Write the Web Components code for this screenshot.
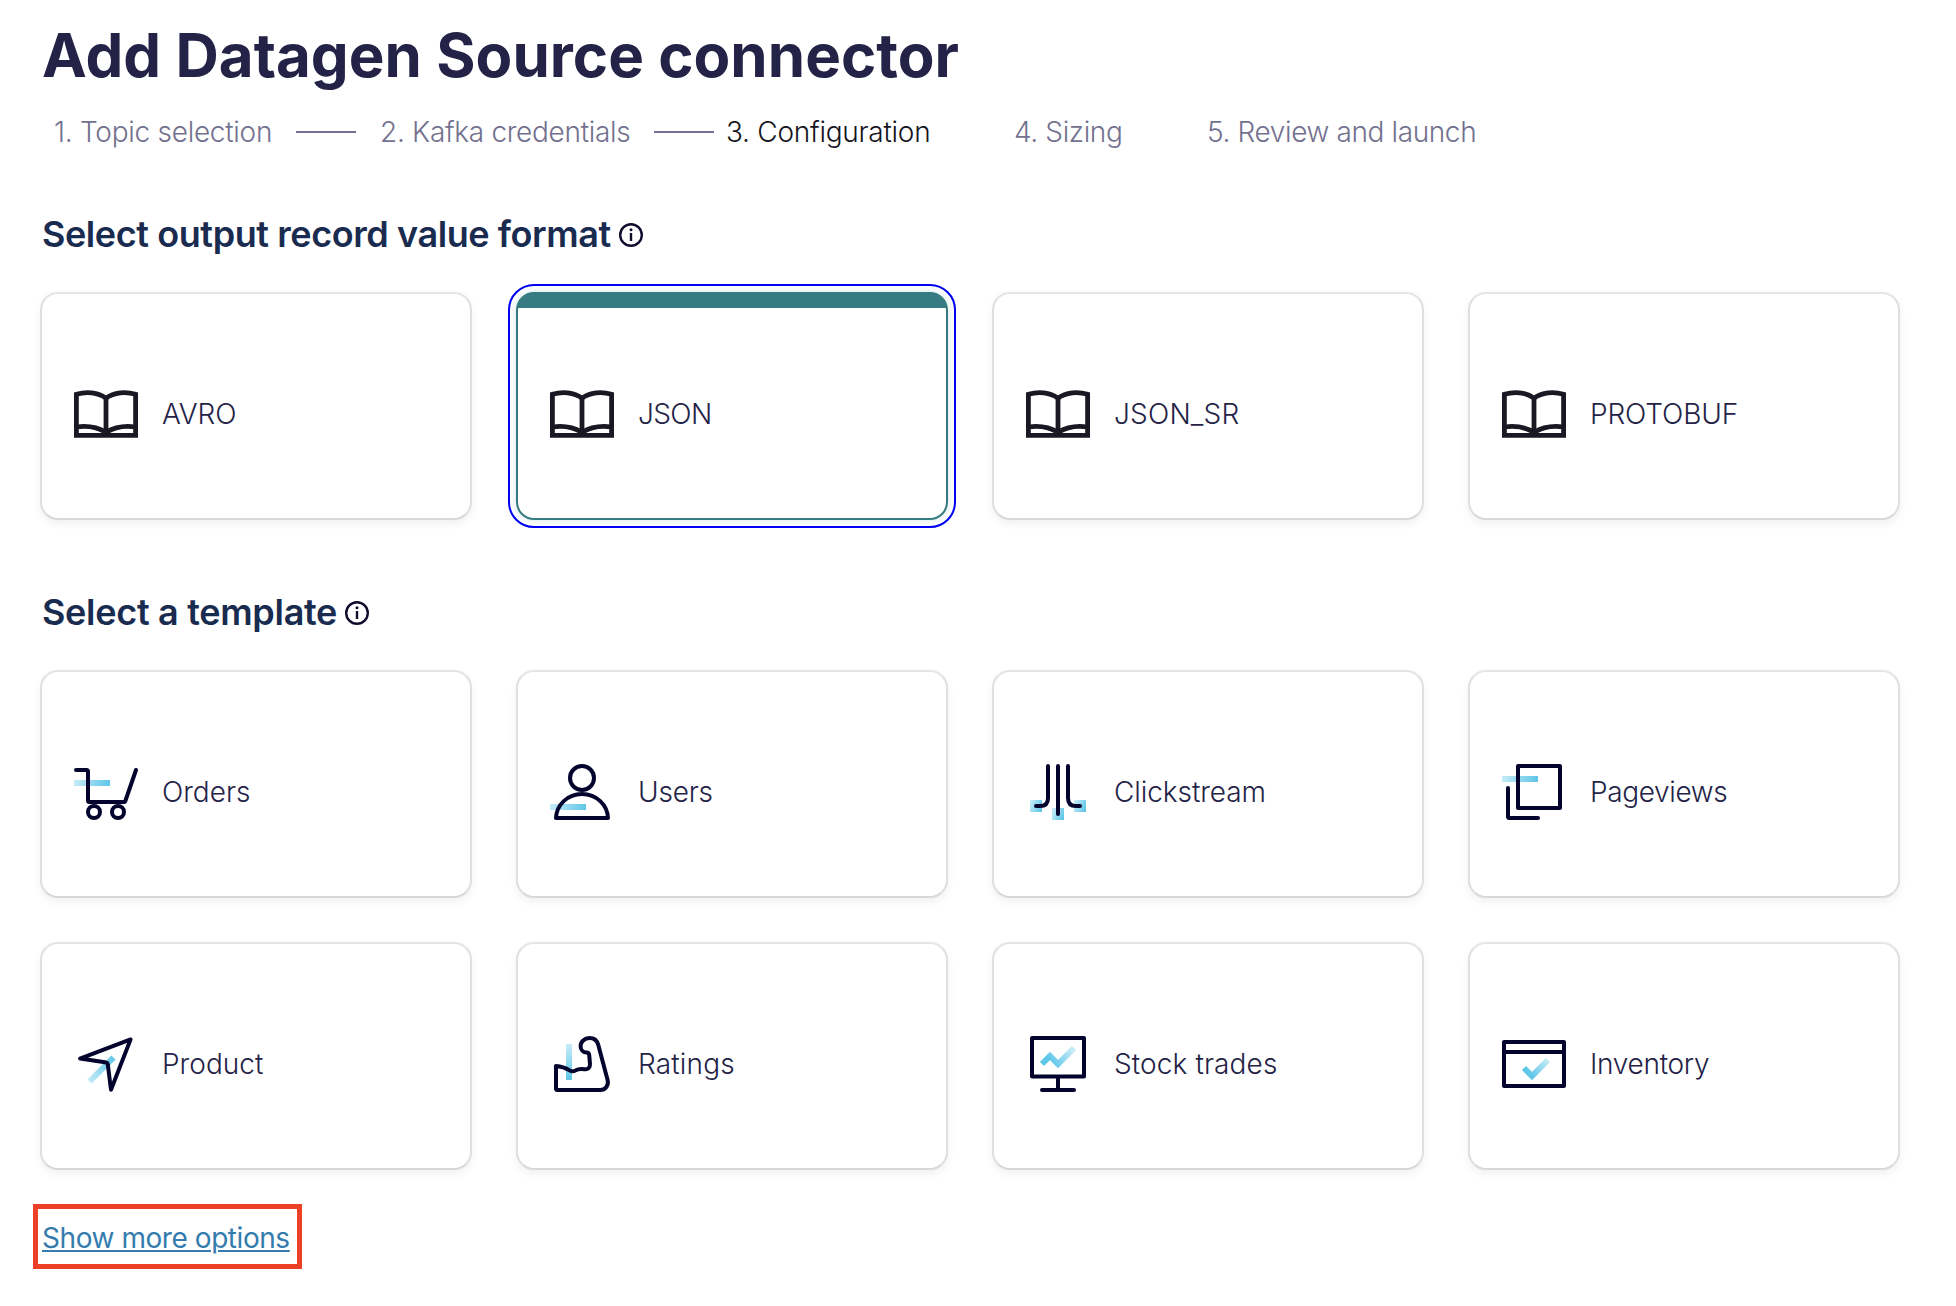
<!DOCTYPE html>
<html lang="en">
<head>
<meta charset="utf-8">
<title>Add Datagen Source connector</title>
<style>
body { margin: 0; background: #fff; font-family: Inter, "Liberation Sans", sans-serif; }
</style>
</head>
<body>
<connector-page>
  <step-list slot="steps">
    <step-item style="width:242px;letter-spacing:-.27px">1. Topic selection</step-item>
    <step-line style="margin-right:24px"></step-line>
    <step-item style="width:274px;letter-spacing:-.3px">2. Kafka credentials</step-item>
    <step-line style="margin-right:12px"></step-line>
    <step-item current style="width:288px;letter-spacing:-.26px">3. Configuration</step-item>
    <step-item style="width:193px;letter-spacing:-.36px">4. Sizing</step-item>
    <step-item style="letter-spacing:-.38px">5. Review and launch</step-item>
  </step-list>
  <option-section>
    <span slot="title" style="letter-spacing:-.42px;margin-right:8px">Select output record value format</span>
    <option-card icon="book" style="letter-spacing:-.1px">AVRO</option-card>
    <option-card icon="book" selected style="letter-spacing:-.6px">JSON</option-card>
    <option-card icon="book" style="letter-spacing:.2px">JSON_SR</option-card>
    <option-card icon="book" style="letter-spacing:-.12px">PROTOBUF</option-card>
  </option-section>
  <option-section>
    <span slot="title" style="letter-spacing:-.3px;margin-right:8px">Select a template</span>
    <option-card icon="cart">Orders</option-card>
    <option-card icon="user" style="letter-spacing:-.2px">Users</option-card>
    <option-card icon="stream" style="letter-spacing:-.07px">Clickstream</option-card>
    <option-card icon="pages" style="letter-spacing:-.36px">Pageviews</option-card>
    <option-card icon="arrow" style="letter-spacing:.04px">Product</option-card>
    <option-card icon="arm" style="letter-spacing:.18px">Ratings</option-card>
    <option-card icon="board" style="letter-spacing:.12px">Stock trades</option-card>
    <option-card icon="window" style="letter-spacing:-.29px">Inventory</option-card>
  </option-section>
  <more-link slot="footer">Show more options</more-link>
</connector-page>
<script>
const define = (name, html) => customElements.define(name, class extends HTMLElement {
  constructor() {
    super();
    this.attachShadow({ mode: 'open' }).innerHTML = html;
  }
});

define('connector-page', `
  <style>
    :host { display: flex; flex-direction: column; box-sizing: border-box; width: 1956px; height: 1306px; padding: 19px 56px 0 40px; overflow: hidden; }
    h1 { margin: 0 0 24px 2px; font-size: 60px; line-height: 72px; font-weight: 700; letter-spacing: .04px; color: #242347; white-space: nowrap; }
    main { display: flex; flex-direction: column; gap: 70px; margin: 63px 0 34px; }
  </style>
  <h1>Add Datagen Source connector</h1>
  <slot name="steps"></slot>
  <main><slot></slot></main>
  <slot name="footer"></slot>`);

define('step-list', `
  <style>:host { display: flex; align-items: center; height: 34px; padding-left: 14px; }</style>
  <slot></slot>`);

define('step-item', `
  <style>
    :host { display: block; flex: none; font-size: 28px; line-height: 34px; font-weight: 300; color: #73718f; white-space: nowrap; }
    :host([current]) { color: #15151d; }
  </style>
  <slot></slot>`);

define('step-line', `
  <style>:host { display: block; flex: none; width: 60px; height: 2px; background: #737196; }</style>`);

define('option-section', `
  <style>
    :host { display: flex; flex-direction: column; gap: 36px; }
    h2 { display: flex; align-items: center; height: 44px; margin: 0 0 0 2px; font-size: 36px; line-height: 44px; font-weight: 600; color: #1a2b50; white-space: nowrap; }
    svg { display: block; margin-top: 2px; }
    .grid { display: grid; grid-template-columns: repeat(4, 432px); gap: 44px; }
  </style>
  <h2><slot name="title"></slot><svg width="24" height="24" viewBox="0 0 24 24" fill="none" stroke="#120b2e" stroke-width="2.4"><circle cx="12" cy="12" r="10.8"/><path d="M12 10V18"/><circle cx="12" cy="6.8" r="1.5" fill="#120b2e" stroke="none"/></svg></h2>
  <div class="grid"><slot></slot></div>`);

const gradient = (x1, y1, x2, y2) =>
  `<defs><linearGradient id="g" gradientUnits="userSpaceOnUse" x1="${x1}" y1="${y1}" x2="${x2}" y2="${y2}"><stop stop-color="#c5ebf7"/><stop offset="1" stop-color="#5fc6e8"/></linearGradient></defs>`;
const line = 'fill="none" stroke="#03032d" stroke-width="4" stroke-linecap="round" stroke-linejoin="round"';

const icons = {
  book: `<g fill="none" stroke="#191924" stroke-width="4.8"><path d="M2.4 53.4H61.6V12.2C52 9.4 40 10 32 16.2C24 10 12 9.4 2.4 12.2Z" stroke-linejoin="miter"/><path d="M32 15V52"/><path d="M2.4 45C12 43.6 23 44.8 32 50.4C41 44.8 52 43.6 61.6 45"/></g>`,
  cart: `${gradient(0, 0, 36, 0)}<rect y="20" width="36" height="6" fill="url(#g)"/><g ${line}><path d="M2 10H12.5Q14 10 14 11.5V40.5Q14 42 15.5 42H49.5Q51 42 51.5 40.5L62 10"/><circle cx="20" cy="52" r="6"/><circle cx="44" cy="52" r="6"/></g>`,
  user: `${gradient(0, 0, 36, 0)}<rect y="44" width="36" height="6" fill="url(#g)"/><g ${line}><circle cx="32" cy="18" r="12"/><path d="M6 58H58C57.500 45 46.500 34 32 34S6.500 45 6 58Z"/></g>`,
  stream: `<defs><linearGradient id="g" x1="0" y1=".3" x2="1" y2=".7"><stop stop-color="#c5ebf7"/><stop offset="1" stop-color="#5fc6e8"/></linearGradient></defs><g fill="url(#g)"><rect x="4" y="40" width="12" height="12"/><rect x="26" y="48" width="12" height="12"/><rect x="48" y="40" width="12" height="12"/></g><path ${line} d="M22 6V38Q22 46 14 46H10M32 6V54M42 6V38Q42 46 50 46H54"/>`,
  pages: `${gradient(0, 0, 36, 0)}<rect y="16" width="36" height="6" fill="url(#g)"/><path ${line} d="M16 6H58V48H16ZM6 28V56.500Q6 58 7.500 58H36"/>`,
  arrow: `${gradient(14, 49, 40, 24)}<path d="M15.500 49.500L39.500 25.500" stroke="url(#g)" stroke-width="6"/><path ${line} d="M56.600 7.400L6 26.600L31 30.200Q33.600 30.600 33.800 32.600L37 57.800Z"/>`,
  arm: `${gradient(0, 12, 0, 48)}<rect x="16" y="12" width="6" height="36" fill="url(#g)"/><path ${line} d="M6 34V56.500Q6 58 7.500 58H50C55.500 58 59 53.200 57.600 48L48.300 13C47 8 43.500 6 39.500 6C34.500 6 30.600 9.800 30.600 14.200C30.600 17.600 33 20.600 36.600 20.600Q38.800 20.600 39.200 23L40 32C40.200 35.600 38 37.800 34.600 37.200C30.500 36.500 28.400 36.600 25.600 38.400Q22.600 40.200 19.600 38.400C14.500 35.200 12 34.400 6 34Z"/>`,
  board: `${gradient(46, 18, 26, 32)}<path d="M16 32L24 24L32 32L48 16" fill="none" stroke="url(#g)" stroke-width="6"/><path ${line} d="M6 6H58V44.400H6ZM32 45V58M16 58H48"/>`,
  window: `${gradient(46, 28, 28, 42)}<path d="M22 36L30 44L46 28" fill="none" stroke="url(#g)" stroke-width="6"/><path ${line} d="M2 10H62V54H2ZM2 20H62"/>`
};

customElements.define('option-card', class extends HTMLElement {
  constructor() {
    super();
    this.attachShadow({ mode: 'open' }).innerHTML = `
      <style>
        :host { display: flex; align-items: center; gap: 24px; box-sizing: border-box; height: 228px; padding: 16px 32px 0; border: 2px solid #dfdfdf; border-top-color: #e5e5e5; border-bottom-color: #d8d8d8; border-radius: 18px; background: #fff; box-shadow: 0 4px 8px rgba(0,0,0,.06); font-size: 28px; line-height: 36px; font-weight: 300; color: #242347; white-space: nowrap; }
        :host([selected]) { border-color: #377b82; background: linear-gradient(#377b82 14px, #fff 14px); outline: 2px solid #0000f5; outline-offset: 6px; box-shadow: 0 0 8px rgba(55,123,130,.2); }
        svg { display: block; flex: none; overflow: visible; }
      </style>
      <svg width="64" height="64" viewBox="0 0 64 64">${icons[this.getAttribute('icon')]}</svg>
      <span><slot></slot></span>`;
  }
});

define('more-link', `
  <style>
    :host { display: flex; align-items: center; box-sizing: border-box; align-self: flex-start; width: 269px; height: 65px; margin-left: -7px; padding: 3px 0 0 4px; border: 5px solid #ec4127; }
    a { font-size: 28px; line-height: 34px; font-weight: 400; letter-spacing: -.44px; color: #347cad; text-decoration: underline; text-decoration-thickness: 2px; text-underline-offset: 2px; white-space: nowrap; }
  </style>
  <a><slot></slot></a>`);
</script>
</body>
</html>
